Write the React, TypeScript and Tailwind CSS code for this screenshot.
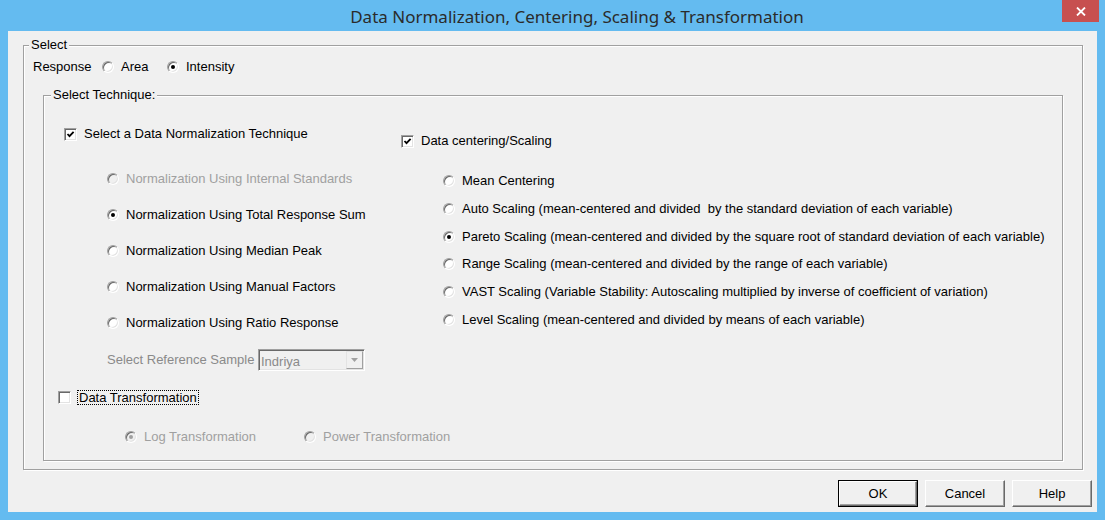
import React from "react";

type RadioProps = { checked?: boolean; disabled?: boolean };

// classic 3D radio circle
function RadioDot({ checked = false, disabled = false }: RadioProps) {
  return (
    <span
      className={`flex h-[12px] w-[12px] shrink-0 items-center justify-center rounded-full border border-t-[#a0a0a0] border-l-[#a0a0a0] border-r-white border-b-white shadow-[inset_1px_1px_0_#696969,inset_-1px_-1px_0_#e3e3e3] ${
        disabled ? "bg-[#f0f0f0]" : "bg-white"
      }`}
    >
      {checked && (
        <span className={`h-[4px] w-[4px] rounded-full ${disabled ? "bg-[#a0a0a0]" : "bg-black"}`} />
      )}
    </span>
  );
}

function CheckBox({ checked = false }: { checked?: boolean }) {
  return (
    <span className="flex h-[13px] w-[13px] shrink-0 items-center justify-center border border-t-[#a0a0a0] border-l-[#a0a0a0] border-r-white border-b-white bg-white shadow-[inset_1px_1px_0_#696969,inset_-1px_-1px_0_#e3e3e3]">
      {checked && (
        <svg width="9" height="9" viewBox="0 0 9 9">
          <path d="M1.5 4 L3.5 6.2 L7.6 1.8" stroke="#000" strokeWidth="1.8" fill="none" />
        </svg>
      )}
    </span>
  );
}

function Option({
  label,
  checked,
  disabled,
  className = "",
}: RadioProps & { label: string; className?: string }) {
  return (
    <div className={`flex h-[16px] items-center ${className}`}>
      <RadioDot checked={checked} disabled={disabled} />
      <span className={`ml-[7px] whitespace-pre ${disabled ? "text-[#a0a0a0]" : "text-black"}`}>{label}</span>
    </div>
  );
}

function DlgButton({ label, primary = false }: { label: string; primary?: boolean }) {
  return (
    <div className={`h-[27px] w-[80px] ${primary ? "border border-black" : ""}`}>
      <div className="flex h-full w-full items-center justify-center border border-t-white border-l-white border-r-[#696969] border-b-[#696969] bg-[#f0f0f0] shadow-[inset_-1px_-1px_0_#a0a0a0] text-black">
        {label}
      </div>
    </div>
  );
}

const normalization = [
  { label: "Normalization Using Internal Standards", disabled: true, mt: "mt-[29px]" },
  { label: "Normalization Using Total Response Sum", checked: true, mt: "mt-[20px]" },
  { label: "Normalization Using Median Peak", mt: "mt-[20px]" },
  { label: "Normalization Using Manual Factors", mt: "mt-[20px]" },
  { label: "Normalization Using Ratio Response", mt: "mt-[20px]" },
];

const scaling = [
  { label: "Mean Centering", mt: "mt-[24px]" },
  { label: "Auto Scaling (mean-centered and divided  by the standard deviation of each variable)", mt: "mt-[12px]" },
  {
    label: "Pareto Scaling (mean-centered and divided by the square root of standard deviation of each variable)",
    checked: true,
    mt: "mt-[12px]",
  },
  { label: "Range Scaling (mean-centered and divided by the range of each variable)", mt: "mt-[11px]" },
  { label: "VAST Scaling (Variable Stability: Autoscaling multiplied by inverse of coefficient of variation)", mt: "mt-[12px]" },
  { label: "Level Scaling (mean-centered and divided by means of each variable)", mt: "mt-[12px]" },
];

export default function App() {
  return (
    <div className="flex h-[520px] w-[1105px] flex-col overflow-hidden bg-[#64bbf0] font-['Liberation_Sans',Arial,sans-serif] text-[13px]">
      {/* title bar */}
      <div className="flex h-[31px] shrink-0">
        <div className="flex flex-1 items-center justify-center pl-[92px] pt-[3px] font-['Noto_Sans',sans-serif] text-[17px] text-[#2b2b2b]">
          Data Normalization, Centering, Scaling &amp; Transformation
        </div>
        <div className="mr-[6px] flex h-[22px] w-[37px] items-center justify-center bg-[#c75050]">
          <svg width="10" height="9" viewBox="0 0 10 9">
            <path d="M1 0.5 L9 8.5 M9 0.5 L1 8.5" stroke="#fff" strokeWidth="1.8" />
          </svg>
        </div>
      </div>

      {/* client area */}
      <div className="mx-[8px] flex h-[481px] flex-col bg-[#f0f0f0]">
        <fieldset className="ml-[15px] mt-[6px] w-[1060px] border border-[#a0a0a0] pb-[8px] shadow-[inset_1px_1px_0_#fff,1px_1px_0_#fff]">
          <legend className="ml-[5px] bg-[#f0f0f0] px-[2px] leading-[16px] text-black">Select</legend>

          <div className="ml-[9px] mt-[6px] flex h-[16px] items-center text-black">
            <span className="w-[69px]">Response</span>
            <Option label="Area" className="w-[65px]" />
            <Option label="Intensity" checked />
          </div>

          <fieldset className="ml-[19px] mt-[12px] w-[1020px] border border-[#a0a0a0] pb-[15px] shadow-[inset_1px_1px_0_#fff,1px_1px_0_#fff]">
            <legend className="ml-[7px] bg-[#f0f0f0] px-[2px] leading-[16px] text-black">Select Technique:</legend>

            <div className="flex">
              {/* normalization column */}
              <div className="flex w-[357px] flex-col">
                <div className="ml-[20px] mt-[23px] flex h-[16px] items-center">
                  <CheckBox checked />
                  <span className="ml-[7px] whitespace-nowrap">Select a Data Normalization Technique</span>
                </div>
                {normalization.map((o) => (
                  <Option key={o.label} label={o.label} checked={o.checked} disabled={o.disabled} className={`ml-[63px] ${o.mt}`} />
                ))}
                <div className="ml-[63px] mt-[18px] flex h-[22px] items-center">
                  <span className="w-[151px] whitespace-nowrap text-[#8a8a8a]">Select Reference Sample</span>
                  <div className="flex h-[22px] w-[107px] border border-t-[#a0a0a0] border-l-[#a0a0a0] border-r-white border-b-white bg-[#f0f0f0] shadow-[inset_1px_1px_0_#696969,inset_-1px_-1px_0_#e3e3e3]">
                    <span className="flex-1 pl-[2px] pt-[2px] text-[#8a8a8a]">Indriya</span>
                    <div className="m-[1px] flex w-[17px] items-center justify-center border border-t-[#e3e3e3] border-l-[#e3e3e3] border-r-[#a0a0a0] border-b-[#a0a0a0] bg-[#f0f0f0]">
                      <svg width="7" height="4" viewBox="0 0 7 4">
                        <path d="M0 0 H7 L3.5 4 Z" fill="#a0a0a0" />
                      </svg>
                    </div>
                  </div>
                </div>
              </div>

              {/* centering / scaling column */}
              <div className="flex flex-1 flex-col">
                <div className="mt-[30px] flex h-[16px] items-center">
                  <CheckBox checked />
                  <span className="ml-[7px] whitespace-nowrap">Data centering/Scaling</span>
                </div>
                {scaling.map((o) => (
                  <Option key={o.label} label={o.label} checked={o.checked} className={`ml-[42px] ${o.mt}`} />
                ))}
              </div>
            </div>

            <div className="ml-[14px] mt-[18px] flex h-[16px] items-center">
              <CheckBox />
              <span className="ml-[6px] border border-dotted border-black px-[1px] leading-[13px] whitespace-nowrap">
                Data Transformation
              </span>
            </div>

            <div className="ml-[81px] mt-[24px] flex">
              <Option label="Log Transformation" checked disabled className="w-[179px]" />
              <Option label="Power Transformation" disabled />
            </div>
          </fieldset>
        </fieldset>

        <div className="mr-[5px] mt-[10px] flex justify-end gap-[7px]">
          <DlgButton label="OK" primary />
          <DlgButton label="Cancel" />
          <DlgButton label="Help" />
        </div>
      </div>
    </div>
  );
}
